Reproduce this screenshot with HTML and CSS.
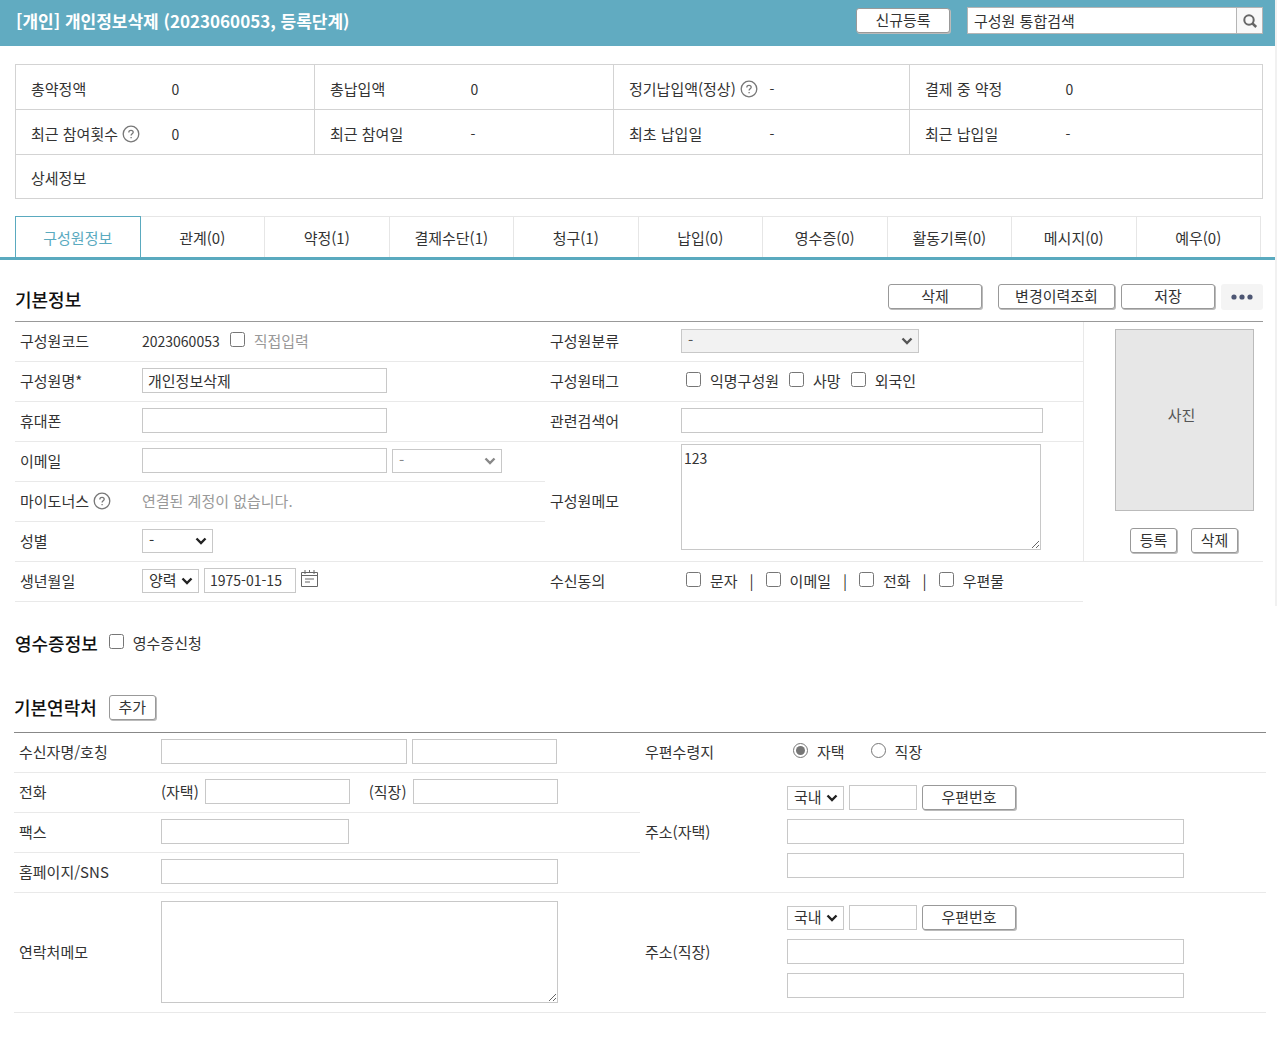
FILE: index.html
```html
<!DOCTYPE html>
<html lang="ko">
<head>
<meta charset="utf-8">
<meta name="viewport" content="width=device-width, initial-scale=1">
<title>개인정보삭제 - 구성원정보</title>
<link rel="stylesheet" href="styles.css">
</head>
<body>
<svg class="sprite" aria-hidden="true">
  <symbol id="help" viewBox="0 0 18 18">
    <circle cx="9" cy="9" r="7.8" fill="none" stroke="#777" stroke-width="1.3"/>
    <path d="M6.8 7.4c0-1.4 1-2.1 2.2-2.1s2.2.7 2.2 1.9c0 1.7-2.1 1.6-2.1 3.4M9.1 11.9v1.3" fill="none" stroke="#777" stroke-width="1.3"/>
  </symbol>
</svg>

<div class="member">
  <header class="topbar">
    <h1 class="topbar-title">[개인] 개인정보삭제 (2023060053, 등록단계)</h1>
    <button type="button" class="btn btn-wide btn-top">신규등록</button>
    <form class="search" role="search">
      <input class="search-input" type="text" value="구성원 통합검색" aria-label="구성원 통합검색">
      <button type="button" class="search-btn" aria-label="검색">
        <svg width="16" height="16" viewBox="0 0 16 16"><circle cx="7" cy="7" r="4.7" fill="none" stroke="#666" stroke-width="2"/><path d="M10.4 10.4l3.8 3.6" stroke="#666" stroke-width="2.6"/></svg>
      </button>
    </form>
  </header>

  <table class="summary">
    <colgroup>
      <col class="c-label"><col class="c-value"><col class="c-label"><col class="c-value">
      <col class="c-label"><col class="c-value-narrow"><col class="c-label"><col>
    </colgroup>
    <tr>
      <th scope="row">총약정액</th><td>0</td>
      <th scope="row">총납입액</th><td>0</td>
      <th scope="row"><span class="with-help">정기납입액(정상)<svg class="help"><use href="#help"/></svg></span></th><td>-</td>
      <th scope="row">결제 중 약정</th><td>0</td>
    </tr>
    <tr>
      <th scope="row"><span class="with-help">최근 참여횟수<svg class="help"><use href="#help"/></svg></span></th><td>0</td>
      <th scope="row">최근 참여일</th><td>-</td>
      <th scope="row">최초 납입일</th><td>-</td>
      <th scope="row">최근 납입일</th><td>-</td>
    </tr>
    <tr class="summary-last">
      <th scope="row">상세정보</th><td colspan="7"></td>
    </tr>
  </table>

  <nav class="tabs">
    <a class="tab tab-on" href="#info">구성원정보</a>
    <a class="tab" href="#relation">관계(0)</a>
    <a class="tab" href="#pledge">약정(1)</a>
    <a class="tab" href="#method">결제수단(1)</a>
    <a class="tab" href="#billing">청구(1)</a>
    <a class="tab" href="#payment">납입(0)</a>
    <a class="tab" href="#receipt">영수증(0)</a>
    <a class="tab" href="#activity">활동기록(0)</a>
    <a class="tab" href="#message">메시지(0)</a>
    <a class="tab" href="#respect">예우(0)</a>
  </nav>

  <section class="basic" id="info">
    <div class="basic-head">
      <h2>기본정보</h2>
      <div class="actions">
        <button type="button" class="btn btn-wide btn-delete">삭제</button>
        <button type="button" class="btn btn-history">변경이력조회</button>
        <button type="button" class="btn btn-wide">저장</button>
        <button type="button" class="more" aria-label="더보기">
          <svg width="22" height="6" viewBox="0 0 22 6" fill="#4d5673"><circle cx="3" cy="3" r="2.6"/><circle cx="11" cy="3" r="2.6"/><circle cx="19" cy="3" r="2.6"/></svg>
        </button>
      </div>
    </div>

    <div class="basic-grid">
      <div class="col">
        <div class="row">
          <span class="name">구성원코드</span>
          <span class="num">2023060053</span>
          <label class="check muted code-check"><input type="checkbox">직접입력</label>
        </div>
        <div class="row">
          <label class="name" for="mname">구성원명*</label>
          <input id="mname" class="box w-name" type="text" value="개인정보삭제">
        </div>
        <div class="row">
          <label class="name" for="mobile">휴대폰</label>
          <input id="mobile" class="box w-name" type="text">
        </div>
        <div class="row">
          <label class="name" for="email">이메일</label>
          <input id="email" class="box w-name" type="text">
          <select class="pick w-domain" aria-label="이메일 도메인" disabled><option>-</option></select>
        </div>
        <div class="row">
          <span class="name with-help">마이도너스<svg class="help"><use href="#help"/></svg></span>
          <span class="muted">연결된 계정이 없습니다.</span>
        </div>
        <div class="row">
          <label class="name" for="gender">성별</label>
          <select id="gender" class="pick w-gender"><option>-</option></select>
        </div>
        <div class="row">
          <label class="name" for="birth">생년월일</label>
          <select class="pick w-short" aria-label="양력/음력"><option>양력</option></select>
          <input id="birth" class="box num w-date" type="text" value="1975-01-15">
          <button type="button" class="calendar" aria-label="달력">
            <svg width="17" height="17" viewBox="0 0 17 17" fill="none" stroke="#666"><path d="M.5 2.5h16v14H.5zM.5 5.5h16M4 0v4M13 0v4M8.500 0v3M4 9h9M4 12h5" /></svg>
          </button>
        </div>
      </div>

      <div class="col">
        <div class="row">
          <label class="name name-r" for="class">구성원분류</label>
          <select id="class" class="pick pick-grey w-class" disabled><option>-</option></select>
        </div>
        <div class="row">
          <span class="name name-r">구성원태그</span>
          <div class="checks">
            <label class="check"><input type="checkbox">익명구성원</label>
            <label class="check"><input type="checkbox">사망</label>
            <label class="check"><input type="checkbox">외국인</label>
          </div>
        </div>
        <div class="row">
          <label class="name name-r" for="keyword">관련검색어</label>
          <input id="keyword" class="box w-keyword" type="text">
        </div>
        <div class="row row-memo">
          <label class="name name-r" for="memo">구성원메모</label>
          <textarea id="memo" class="area area-memo">123</textarea>
        </div>
        <div class="row">
          <span class="name name-r">수신동의</span>
          <div class="checks consents">
            <label class="check"><input type="checkbox">문자</label><span class="bar">|</span>
            <label class="check"><input type="checkbox">이메일</label><span class="bar">|</span>
            <label class="check"><input type="checkbox">전화</label><span class="bar">|</span>
            <label class="check"><input type="checkbox">우편물</label>
          </div>
        </div>
      </div>

      <div class="photo">
        <div class="photo-box">사진</div>
        <div class="photo-actions">
          <button type="button" class="btn btn-small">등록</button>
          <button type="button" class="btn btn-small">삭제</button>
        </div>
      </div>
    </div>
  </section>
</div>

<section class="receipt">
  <h2>영수증정보</h2>
  <label class="check"><input type="checkbox">영수증신청</label>
</section>

<section class="contact">
  <div class="contact-head">
    <h2>기본연락처</h2>
    <button type="button" class="btn btn-small">추가</button>
  </div>
  <div class="contact-grid">
    <div class="col">
      <div class="row">
        <label class="name name-c" for="receiver">수신자명/호칭</label>
        <input id="receiver" class="box w-receiver" type="text">
        <input class="box w-phone" type="text" aria-label="호칭">
      </div>
      <div class="row">
        <span class="name name-c">전화</span>
        <label class="paren" for="tel-home">(자택)</label>
        <input id="tel-home" class="box w-phone" type="text">
        <label class="paren paren-work" for="tel-work">(직장)</label>
        <input id="tel-work" class="box w-phone" type="text">
      </div>
      <div class="row">
        <label class="name name-c" for="fax">팩스</label>
        <input id="fax" class="box w-fax" type="text">
      </div>
      <div class="row">
        <label class="name name-c" for="sns">홈페이지/SNS</label>
        <input id="sns" class="box w-long" type="text">
      </div>
      <div class="row row-memo">
        <label class="name name-c" for="cmemo">연락처메모</label>
        <textarea id="cmemo" class="area area-contact"></textarea>
      </div>
    </div>
    <div class="col">
      <div class="row">
        <span class="name name-c">우편수령지</span>
        <div class="radios">
          <label class="check"><input type="radio" name="post" checked>자택</label>
          <label class="check"><input type="radio" name="post">직장</label>
        </div>
      </div>
      <div class="row row-memo">
        <label class="name name-c" for="addr-home">주소(자택)</label>
        <div class="address">
          <div class="zip">
            <select class="pick w-short" aria-label="국내/국외"><option>국내</option></select>
            <input class="box w-zip" type="text" aria-label="자택 우편번호">
            <button type="button" class="btn btn-wide">우편번호</button>
          </div>
          <input id="addr-home" class="box w-long" type="text">
          <input class="box w-long" type="text" aria-label="자택 상세주소">
        </div>
      </div>
      <div class="row row-memo">
        <label class="name name-c" for="addr-work">주소(직장)</label>
        <div class="address">
          <div class="zip">
            <select class="pick w-short" aria-label="국내/국외"><option>국내</option></select>
            <input class="box w-zip" type="text" aria-label="직장 우편번호">
            <button type="button" class="btn btn-wide">우편번호</button>
          </div>
          <input id="addr-work" class="box w-long" type="text">
          <input class="box w-long" type="text" aria-label="직장 상세주소">
        </div>
      </div>
    </div>
  </div>
</section>
</body>
</html>
```

FILE: styles.css
```css
* {
  box-sizing: border-box;
}

body {
  margin: 0;
  background: #fff;
  color: #333;
  font: 15px/20px "Noto Sans CJK KR", sans-serif;
}

button,
input,
select,
textarea {
  margin: 0;
  font: inherit;
  color: inherit;
}

h1,
h2 {
  margin: 0;
  font-size: 17px;
  line-height: 24px;
}

h2 {
  color: #111;
  font-size: 18px;
  font-weight: 500;
}

.sprite {
  display: none;
}

.member {
  border-right: 2px solid #f1f1f1;
  padding-bottom: 4px;
}

/* top bar */
.topbar {
  display: flex;
  align-items: flex-start;
  height: 46px;
  padding: 7px 12px 0 16px;
  background: #61abc1;
}

.topbar-title {
  flex: 1;
  padding-top: 2px;
  color: #fff;
  white-space: nowrap;
}

.search {
  display: flex;
  width: 296px;
  height: 27px;
  margin-left: 17px;
  border: 1px solid #b5b5b5;
  background: #fff;
}

.search-input {
  flex: 1;
  min-width: 0;
  border: 0;
  padding: 0 6px;
  background: none;
}

.search-btn {
  display: flex;
  align-items: center;
  justify-content: center;
  width: 26px;
  padding: 0;
  border: 0;
  border-left: 1px solid #b5b5b5;
  background: #f8f8f8;
}

/* buttons */
.btn {
  height: 25px;
  padding: 0 0 2px;
  border: 1px solid #999;
  border-radius: 3px;
  background: #fff;
  box-shadow: 1px 1px 0 #bbb;
  line-height: 20px;
}

.btn-wide {
  width: 94px;
}

.btn-history {
  width: 117px;
}

.btn-small {
  width: 47px;
}

.btn-top {
  margin-top: 1px;
}

/* summary */
.summary {
  width: calc(100% - 27px);
  margin: 18px 12px 0 15px;
  border-collapse: collapse;
  table-layout: fixed;
  border: 1px solid #d3d3d3;
}

.summary tr {
  height: 45px;
  border-bottom: 1px solid #d3d3d3;
}

.summary .summary-last {
  height: 44px;
}

.summary th,
.summary td {
  padding: 3px 0 0;
  font-weight: inherit;
  text-align: left;
}

.summary th {
  padding-left: 15px;
  border-left: 1px solid #d3d3d3;
}

.summary td {
  font-size: 14px;
}

.c-label {
  width: 156px;
}

.c-value {
  width: 143px;
}

.c-value-narrow {
  width: 140px;
}

.with-help {
  display: flex;
  align-items: center;
  gap: 4px;
}

.help {
  width: 18px;
  height: 18px;
}

/* tabs */
.tabs {
  display: flex;
  margin-top: 17px;
  padding: 0 14px 0 15px;
  border-bottom: 3px solid #5aaabf;
}

.tab {
  flex: 1;
  height: 41px;
  padding-top: 11px;
  border-top: 1px solid #e6e6e6;
  border-right: 1px solid #e6e6e6;
  color: inherit;
  text-align: center;
  text-decoration: none;
}

.tab-on {
  border: 1px solid #5aaabf;
  border-bottom: 0;
  color: #5aaabf;
}

/* form parts */
.row {
  display: flex;
  align-items: center;
  gap: 5px;
  height: 40px;
  padding-bottom: 2px;
  border-bottom: 1px solid #e9e9e9;
  white-space: nowrap;
}

.row-memo {
  height: 120px;
}

.name {
  flex: none;
  width: 122px;
  padding-left: 5px;
}

.name-r {
  width: 131px;
}

.name-c {
  width: 142px;
}

.num {
  font-size: 14px;
}

.muted {
  color: #999;
}

.box,
.pick,
.area {
  border: 1px solid #c8c8c8;
  border-radius: 0;
  background: #fff;
}

.box {
  height: 25px;
  padding: 0 5px 1px;
}

.pick {
  height: 24px;
  padding: 0 18px 2px 6px;
  appearance: none;
  background: #fff url("data:image/svg+xml,%3Csvg xmlns='http://www.w3.org/2000/svg' width='12' height='8'%3E%3Cpath d='M1.500 1.500L6 6l4.500-4.500' fill='none' stroke='%23222' stroke-width='2.400'/%3E%3C/svg%3E") no-repeat right 5px center;
}

.pick:disabled {
  background-image: url("data:image/svg+xml,%3Csvg xmlns='http://www.w3.org/2000/svg' width='12' height='8'%3E%3Cpath d='M1.500 1.500L6 6l4.500-4.500' fill='none' stroke='%23888' stroke-width='2.400'/%3E%3C/svg%3E");
  color: #888;
  opacity: 1;
}

.pick-grey:disabled {
  background-color: #f2f2f2;
  background-image: url("data:image/svg+xml,%3Csvg xmlns='http://www.w3.org/2000/svg' width='12' height='8'%3E%3Cpath d='M1.500 1.500L6 6l4.500-4.500' fill='none' stroke='%23555' stroke-width='2.400'/%3E%3C/svg%3E");
  color: #555;
}

.area {
  padding: 3px 2px;
  line-height: 20px;
  font-size: 14px;
}

.area-memo {
  width: 360px;
  height: 106px;
  margin-bottom: 8px;
}

.area-contact {
  width: 397px;
  height: 102px;
}

.w-name { width: 245px; }
.w-domain { width: 110px; }
.w-gender { width: 71px; }
.w-short { width: 57px; }
.w-date { width: 92px; }
.w-class { width: 238px; }
.w-keyword { width: 362px; }
.w-receiver { width: 246px; }
.w-phone { width: 145px; }
.w-fax { width: 188px; }
.w-long { width: 397px; }
.w-zip { width: 68px; }

.check {
  display: flex;
  align-items: center;
  gap: 9px;
}

.check input {
  width: 15px;
  height: 15px;
  margin-bottom: 3px;
  accent-color: #767676;
}

.code-check {
  margin-left: 5px;
}

.checks {
  display: flex;
  gap: 10px;
  padding-left: 5px;
}

.consents .bar {
  width: 8px;
  text-align: center;
}

.calendar {
  width: 17px;
  height: 22px;
  padding: 0;
  border: 0;
  background: none;
}

/* basic info */
.basic {
  padding: 23px 12px 0 15px;
}

.basic-head {
  display: flex;
  justify-content: space-between;
  height: 38px;
}

.basic-head h2 {
  padding-top: 4px;
}

.actions {
  display: flex;
  align-items: flex-start;
  gap: 6px;
  padding-top: 1px;
}

.btn-delete {
  margin-right: 10px;
}

.more {
  display: flex;
  align-items: center;
  justify-content: center;
  width: 42px;
  height: 26px;
  padding: 0;
  border: 0;
  border-radius: 3px;
  background: #f4f4f4;
}

.basic-grid {
  display: grid;
  grid-template-columns: 530fr 538fr 180fr;
  border-top: 1px solid #999;
}

.photo {
  display: flex;
  flex-direction: column;
  align-items: center;
  align-self: start;
  gap: 17px;
  height: 240px;
  padding: 7px 0 0 21px;
  border-bottom: 1px solid #e9e9e9;
  border-left: 1px solid #e9e9e9;
}

.photo-box {
  display: flex;
  align-items: center;
  justify-content: center;
  width: 139px;
  height: 182px;
  padding: 0 5px 10px 0;
  border: 1px solid #bbb;
  background: #e7e7e7;
  color: #555;
}

.photo-actions {
  display: flex;
  gap: 14px;
}

/* receipt */
.receipt {
  display: flex;
  align-items: center;
  gap: 11px;
  padding: 25px 15px 0;
}

/* contact */
.contact {
  padding: 40px 11px 24px 14px;
}

.contact-head {
  display: flex;
  gap: 12px;
  height: 37px;
}

.contact-grid {
  display: grid;
  grid-template-columns: 1fr 1fr;
  border-top: 1px solid #888;
}

.paren {
  margin-right: 1px;
}

.paren-work {
  margin-left: 14px;
}

.radios {
  display: flex;
  gap: 26px;
  padding-left: 6px;
}

.address {
  display: flex;
  flex-direction: column;
  gap: 9px;
}

.zip {
  display: flex;
  align-items: center;
  gap: 5px;
}
```
